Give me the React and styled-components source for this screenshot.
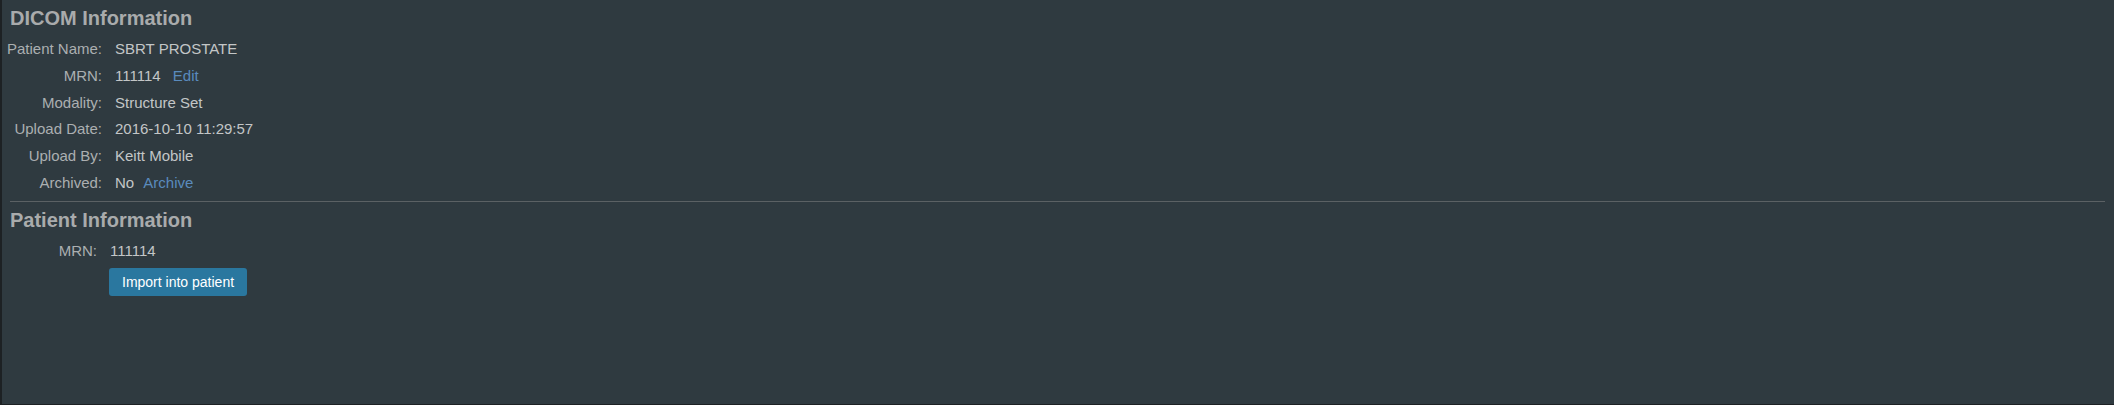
import React from "react"
import styled, { createGlobalStyle } from "styled-components"

const GlobalStyle = createGlobalStyle`
  html, body {
    margin: 0;
    padding: 0;
    background: #1d2124;
    font-family: "Liberation Sans", Arial, sans-serif;
  }
`

const Panel = styled.div`
  margin-left: 2px;
  height: 404px;
  background-color: #2f3a40;
  overflow: hidden;
`

const Section = styled.section`
  display: flex;
  flex-direction: column;
`

const Heading = styled.h2`
  margin: ${props => props.top}px 0 6px 0;
  padding: 0 8px;
  font-size: 20px;
  line-height: 24px;
  font-weight: bold;
  color: #a9abac;
`

const InfoGrid = styled.div`
  display: grid;
  grid-template-columns: ${props => props.labelWidth}px 1fr;
  grid-auto-rows: 26.8px;
  column-gap: 13px;
  font-size: 15px;
  line-height: 26.8px;
`

const Label = styled.div`
  text-align: right;
  color: #abafb1;
  white-space: nowrap;
`

const Value = styled.div`
  color: #c3c6c7;
  white-space: nowrap;
`

const Action = styled.a`
  margin-left: ${props => props.gap}px;
  color: #5a8bbd;
  text-decoration: none;
  cursor: pointer;
`

const Divider = styled.hr`
  margin: 4px 9px 0 8px;
  border: none;
  border-top: 1px solid #5b6164;
  height: 0;
`

const ButtonRow = styled.div`
  padding-left: ${props => props.indent}px;
  margin-top: 3px;
`

const Button = styled.button`
  height: 28px;
  padding: 0 13px;
  border: none;
  border-radius: 3px;
  background-color: #2a779f;
  color: #ffffff;
  font-family: "Liberation Sans", Arial, sans-serif;
  font-size: 14px;
  cursor: pointer;
`

const dicomRows = [
  { label: "Patient Name:", value: "SBRT PROSTATE" },
  { label: "MRN:", value: "111114", action: "Edit", gap: 8 },
  { label: "Modality:", value: "Structure Set" },
  { label: "Upload Date:", value: "2016-10-10 11:29:57" },
  { label: "Upload By:", value: "Keitt Mobile" },
  { label: "Archived:", value: "No", action: "Archive", gap: 5 },
]

export default function App() {
  return (
    <>
      <GlobalStyle />
      <Panel>
        <Section>
          <Heading top={6}>DICOM Information</Heading>
          <InfoGrid labelWidth={100}>
            {dicomRows.map(row => (
              <React.Fragment key={row.label}>
                <Label>{row.label}</Label>
                <Value>
                  {row.value}{" "}
                  {row.action && <Action gap={row.gap}>{row.action}</Action>}
                </Value>
              </React.Fragment>
            ))}
          </InfoGrid>
        </Section>
        <Divider />
        <Section>
          <Heading top={6}>Patient Information</Heading>
          <InfoGrid labelWidth={95}>
            <Label>MRN:</Label>
            <Value>111114</Value>
          </InfoGrid>
          <ButtonRow indent={107}>
            <Button>Import into patient</Button>
          </ButtonRow>
        </Section>
      </Panel>
    </>
  )
}
